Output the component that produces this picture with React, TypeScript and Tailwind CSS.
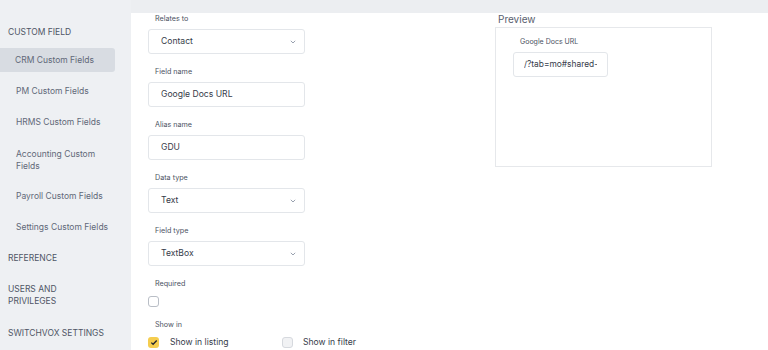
import React from "react";

const font = { fontFamily: "Inter, 'Open Sans', sans-serif" };

function Chevron() {
  return (
    <svg width="8" height="6" viewBox="0 0 8 6" className="text-gray-400">
      <path d="M1.8 1.8 L4 4 L6.2 1.8" fill="none" stroke="currentColor" strokeWidth="1" />
    </svg>
  );
}

function Label({ children }: { children: React.ReactNode }) {
  return <div className="h-[11px] pl-[7px] text-[7.2px] leading-[11px] text-[#4b5262]">{children}</div>;
}

function Field({ label, value, select }: { label: string; value: string; select?: boolean }) {
  return (
    <div className="flex flex-col">
      <Label>{label}</Label>
      <div className="mt-[5px] flex h-[25px] w-[157px] items-center justify-between rounded-[3px] border border-[#e3e6ea] bg-white pl-[12px] pr-[7px]">
        <span className="text-[8.6px] text-[#363c4a]">{value}</span>
        {select && <Chevron />}
      </div>
    </div>
  );
}

export default function App() {
  const sub = "flex h-[24px] items-center pl-[16px] text-[8.5px] text-[#616878]";
  const head = "flex h-[24px] items-center pl-[8px] text-[8.5px] text-[#4e5565]";
  return (
    <div className="flex h-[350px] w-[768px] overflow-hidden bg-white" style={font}>
      <aside className="flex w-[131px] shrink-0 flex-col bg-[#eef0f3] pt-[25px]">
        <div className="pl-[8px] text-[8.5px] leading-[14px] text-[#4e5565]">CUSTOM FIELD</div>
        <div className="mt-[9px] flex h-[24px] w-[115px] items-center rounded-r-[3px] bg-[#d8dce2] pl-[15px] text-[8.5px] text-[#616878]">CRM Custom Fields</div>
        <div className={`mt-[7px] ${sub}`}>PM Custom Fields</div>
        <div className={`mt-[7px] ${sub}`}>HRMS Custom Fields</div>
        <div className="mt-[14px] flex flex-col justify-center pl-[16px] text-[8.5px] leading-[12px] text-[#616878]"><span>Accounting Custom</span><span>Fields</span></div>
        <div className={`mt-[12px] ${sub}`}>Payroll Custom Fields</div>
        <div className={`mt-[7px] ${sub}`}>Settings Custom Fields</div>
        <div className={`mt-[7px] ${head}`}>REFERENCE</div>
        <div className="mt-[13px] flex flex-col pl-[8px] text-[8.5px] leading-[12px] text-[#4e5565]"><span>USERS AND</span><span>PRIVILEGES</span></div>
        <div className={`mt-[14px] ${head}`}>SWITCHVOX SETTINGS</div>
      </aside>
      <div className="flex min-w-0 flex-1 flex-col">
        <div className="h-[13px] shrink-0 bg-[#eceef1]" />
        <div className="flex flex-1">
          <div className="flex w-[364px] shrink-0 flex-col gap-[12px] pl-[17px]">
            <Field label="Relates to" value="Contact" select />
            <Field label="Field name" value="Google Docs URL" />
            <Field label="Alias name" value="GDU" />
            <Field label="Data type" value="Text" select />
            <Field label="Field type" value="TextBox" select />
            <div className="flex flex-col">
              <Label>Required</Label>
              <div className="mt-[7px] h-[11px] w-[11px] rounded-[3px] border border-[#b9bec6] bg-white" />
            </div>
            <div className="flex flex-col">
              <Label>Show in</Label>
              <div className="mt-[6px] flex items-center">
                <div className="flex h-[11px] w-[11px] items-center justify-center rounded-[3px] bg-[#f5cd4f]">
                  <svg width="8" height="7" viewBox="0 0 8 7"><path d="M1.3 3.6 L3.1 5.3 L6.7 1.5" fill="none" stroke="#1f2330" strokeWidth="1.3" /></svg>
                </div>
                <span className="ml-[11px] w-[112px] text-[8.6px] text-[#363c4a]">Show in listing</span>
                <div className="h-[11px] w-[11px] rounded-[3px] border border-[#d6d9de] bg-[#f1f2f4]" />
                <span className="ml-[10px] text-[8.6px] text-[#363c4a]">Show in filter</span>
              </div>
            </div>
          </div>
          <div className="flex flex-col">
            <div className="pl-[3px] text-[10px] leading-[13px] text-[#59606e]">Preview</div>
            <div className="mt-[1px] h-[140px] w-[217px] border border-[#e6e8eb] pl-[17px] pt-[9px]">
              <div className="pl-[7px] text-[7px] leading-[10px] text-[#4b5262]">Google Docs URL</div>
              <div className="mt-[5px] flex h-[25px] w-[95px] items-center rounded-[3px] border border-[#e3e6ea] pl-[10px] pr-[10px]">
                <div className="overflow-hidden whitespace-nowrap text-[8.4px] text-[#363c4a]">/?tab=mo#shared-</div>
              </div>
            </div>
          </div>
        </div>
      </div>
    </div>
  );
}
